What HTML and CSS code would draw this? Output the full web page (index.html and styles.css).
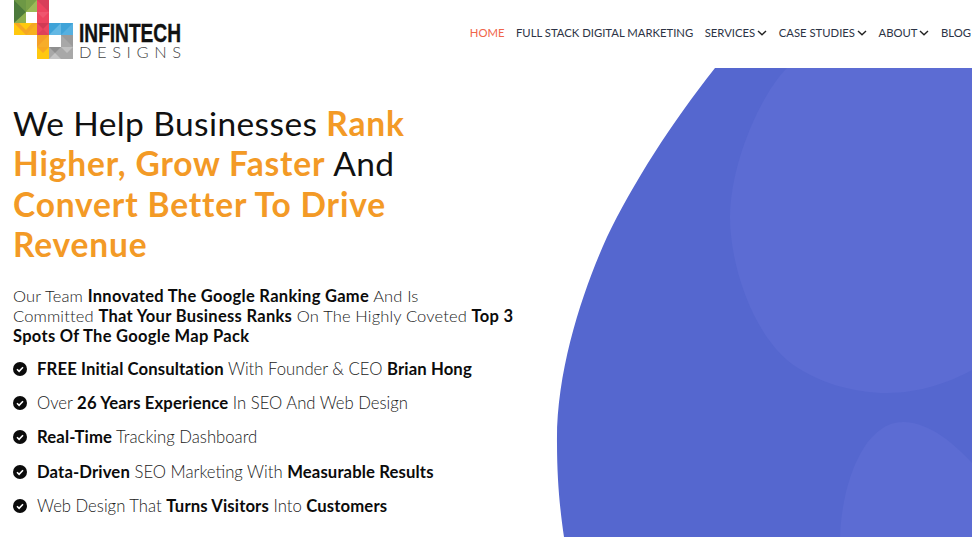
FILE: index.html
```html
<!DOCTYPE html>
<html lang="en">
<head>
    <meta charset="UTF-8">
    <meta name="viewport" content="width=device-width, initial-scale=1.0">
    <title>Infintech Designs</title>
    <link rel="stylesheet" href="styles.css">
</head>
<body>
    <header class="site-header">
        <a class="logo" href="#">
            <svg class="logo-mark" width="62" height="60" viewBox="0 0 62 60">
                <!-- green block -->
                <rect x="0" y="0" width="23" height="23" fill="#8fb04f"/>
                <polygon points="0,0 12,0 12,12" fill="#6d9845"/>
                <polygon points="0,0 12,12 0,12" fill="#4c7a3b"/>
                <polygon points="12,0 23,0 12,12" fill="#7aa248"/>
                <polygon points="0,12 12,12 0,23" fill="#4c7a3b"/>
                <polygon points="12,12 23,0 23,12" fill="#9dbb58"/>
                <rect x="12" y="12" width="11" height="11" fill="#fff"/>
                <!-- red block -->
                <rect x="23" y="0" width="12" height="35" fill="#ec4560"/>
                <polygon points="23,0 35,0 35,12" fill="#d83f5a"/>
                <polygon points="23,12 35,12 29,18" fill="#f0566f"/>
                <polygon points="23,23 35,23 29,29" fill="#d13a55"/>
                <polygon points="23,35 35,35 29,29" fill="#dd4059"/>
                <!-- orange row -->
                <rect x="0" y="23" width="23" height="12" fill="#f5a623"/>
                <polygon points="0,23 12,35 0,35" fill="#ffc80f"/>
                <polygon points="5,23 18,23 12,30" fill="#ffc80f"/>
                <polygon points="12,35 23,23 23,35" fill="#f7b01e"/>
                <!-- blue row -->
                <rect x="35" y="23" width="24" height="12" fill="#3fa3d8"/>
                <polygon points="35,35 47,23 47,35" fill="#63b8e4"/>
                <polygon points="47,35 59,23 59,35" fill="#56b0e0"/>
                <!-- orange column -->
                <rect x="23" y="35" width="12" height="24" fill="#f5a027"/>
                <polygon points="23,47 35,35 35,47" fill="#f7ad2a"/>
                <polygon points="23,47 35,47 35,59 23,59" fill="#ffc80f"/>
                <polygon points="23,47 35,47 29,53" fill="#f7a823"/>
                <!-- grey block -->
                <rect x="35" y="35" width="24" height="24" fill="#a8a8a8"/>
                <polygon points="47,35 59,35 59,47" fill="#9b9b9b"/>
                <polygon points="35,47 47,47 41,53" fill="#8f8f8f"/>
                <polygon points="47,47 59,47 53,53" fill="#c0c0c0"/>
                <polygon points="35,59 41,53 47,59" fill="#c4c4c4"/>
                <rect x="35" y="35" width="12" height="12" fill="#fff"/>
            </svg>
            <svg class="logo-type" width="104" height="40" viewBox="0 0 104 40">
                <text class="logo-top" x="0" y="20" textLength="102" lengthAdjust="spacingAndGlyphs">INFINTECH</text>
                <text class="logo-bottom" x="0" y="36" textLength="102" lengthAdjust="spacing">DESIGNS</text>
            </svg>
        </a>
        <nav class="main-nav">
            <a class="active" href="#">Home</a>
            <a href="#">Full Stack Digital Marketing</a>
            <a href="#">Services<svg class="caret" width="10" height="6" viewBox="0 0 10 6"><path d="M1 1l4 3.8L9 1"/></svg></a>
            <a href="#">Case Studies<svg class="caret" width="10" height="6" viewBox="0 0 10 6"><path d="M1 1l4 3.8L9 1"/></svg></a>
            <a href="#">About<svg class="caret" width="10" height="6" viewBox="0 0 10 6"><path d="M1 1l4 3.8L9 1"/></svg></a>
            <a href="#">Blog</a>
        </nav>
    </header>

    <main class="hero">
        <svg class="hero-blob" width="972" height="469" viewBox="0 68 972 469">
            <path fill="#5567cf" d="M715 68C672 122 632 185 607 237C583 290 556 370 557 443C557 480 560 510 564 537H972V68Z"/>
            <path fill="#5c6cd3" d="M787 68C760 95 730 165 730 217C730 265 752 330 787 360C815 383 855 393 887 393C920 393 950 382 972 370V68Z"/>
            <path fill="#5c6cd3" d="M840 537C842 480 865 422 903 422C930 422 955 445 972 463V537Z"/>
        </svg>
        <div class="hero-copy">
            <h1>We Help Businesses <b>Rank Higher, Grow Faster</b> And <b>Convert Better To Drive Revenue</b></h1>
            <p class="lead">Our Team <b>Innovated The Google Ranking Game</b> And Is<br>Committed <b>That Your Business Ranks</b> On The Highly Coveted <b>Top 3</b><br><b>Spots Of The Google Map Pack</b></p>
            <ul class="points">
                <li><svg class="check" width="14" height="14" viewBox="0 0 14 14"><circle cx="7" cy="7" r="7"/><path d="M4 7.2l2.1 2.1L10 5.2"/></svg><span><b>FREE Initial Consultation</b> With Founder &amp; CEO <b>Brian Hong</b></span></li>
                <li><svg class="check" width="14" height="14" viewBox="0 0 14 14"><circle cx="7" cy="7" r="7"/><path d="M4 7.2l2.1 2.1L10 5.2"/></svg><span>Over <b>26 Years Experience</b> In SEO And Web Design</span></li>
                <li><svg class="check" width="14" height="14" viewBox="0 0 14 14"><circle cx="7" cy="7" r="7"/><path d="M4 7.2l2.1 2.1L10 5.2"/></svg><span><b>Real-Time</b> Tracking Dashboard</span></li>
                <li><svg class="check" width="14" height="14" viewBox="0 0 14 14"><circle cx="7" cy="7" r="7"/><path d="M4 7.2l2.1 2.1L10 5.2"/></svg><span><b>Data-Driven</b> SEO Marketing With <b>Measurable Results</b></span></li>
                <li><svg class="check" width="14" height="14" viewBox="0 0 14 14"><circle cx="7" cy="7" r="7"/><path d="M4 7.2l2.1 2.1L10 5.2"/></svg><span>Web Design That <b>Turns Visitors</b> Into <b>Customers</b></span></li>
            </ul>
        </div>
    </main>
</body>
</html>
```

FILE: styles.css
```css
html, body {
    margin: 0;
    height: 537px;
    overflow: hidden;
}
body {
    font-family: "Lato", "Open Sans", sans-serif;
    background: #fff;
    color: #333;
}
a {
    color: inherit;
    text-decoration: none;
}
.site-header {
    display: flex;
    justify-content: space-between;
    align-items: flex-start;
    height: 68px;
    padding-left: 14px;
    padding-right: 1px;
}
.logo {
    display: flex;
    align-items: flex-start;
}
.logo-type {
    margin: 22px 0 0 3px;
}
.logo-top {
    font-family: "Liberation Sans", sans-serif;
    font-weight: bold;
    font-size: 26.5px;
    fill: #111;
    stroke: #111;
    stroke-width: 0.4;
}
.logo-bottom {
    font-family: "Lato", sans-serif;
    font-weight: 300;
    font-size: 16.5px;
    fill: #444;
}
.main-nav {
    display: flex;
    gap: 11.5px;
    padding-top: 26px;
    font-size: 11.3px;
    line-height: 14px;
    text-transform: uppercase;
    color: #2c3345;
}
.main-nav a {
    white-space: nowrap;
}
.main-nav .active {
    color: #f0654a;
}
.caret {
    margin-left: 2px;
    vertical-align: 1px;
}
.caret path {
    fill: none;
    stroke: #222;
    stroke-width: 1.4;
}
.hero {
    position: relative;
    height: 469px;
}
.hero-blob {
    position: absolute;
    top: 0;
    left: 0;
}
.hero-copy {
    position: relative;
    width: 520px;
    padding: 35px 0 0 13px;
}
h1 {
    width: 400px;
    margin: 0 0 21px;
    font-size: 33.5px;
    line-height: 40.4px;
    letter-spacing: 0.4px;
    font-weight: 400;
    color: #111;
}
h1 b {
    font-weight: 700;
    letter-spacing: 0.85px;
    color: #f39a26;
}
.lead {
    margin: 0 0 6px;
    font-size: 16.5px;
    line-height: 20px;
    letter-spacing: 0.15px;
    font-weight: 300;
    color: #222;
}
.lead b {
    letter-spacing: 0.3px;
}
b {
    font-weight: 700;
    color: #0b0b0b;
}
.points {
    list-style: none;
    margin: 0;
    padding: 0;
    font-size: 16.7px;
    font-weight: 300;
    color: #222;
}
.points b {
    letter-spacing: 0.12px;
}
.points li {
    display: flex;
    align-items: center;
    gap: 10px;
    height: 34.3px;
}
.check circle {
    fill: #0b0b0b;
}
.check path {
    fill: none;
    stroke: #fff;
    stroke-width: 1.6;
}
```
